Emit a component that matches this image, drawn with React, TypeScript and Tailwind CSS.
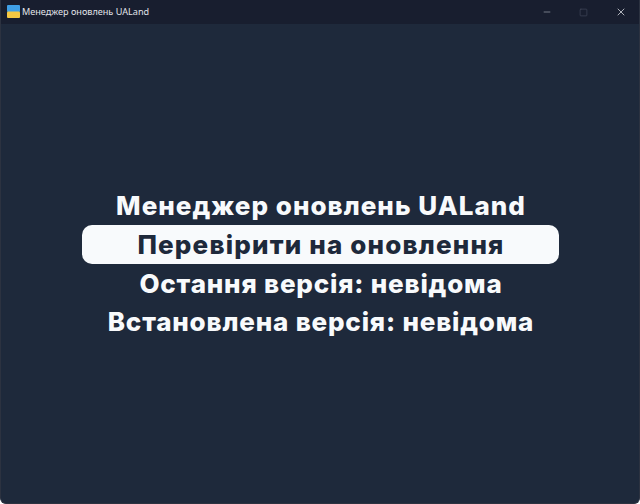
import { Minus, Square, X } from "lucide-react";

const lineClassName = "flex items-center justify-center pl-[2px] text-[26px] font-extrabold whitespace-nowrap";

export default function App() {
  return (
    <div className="flex h-[504px] w-[640px] flex-col overflow-hidden rounded-b-md border-x border-b border-[#2c3240] bg-[#1e293b] font-['Inter',sans-serif] text-[#f8fafc]">
      <div className="flex h-[24px] shrink-0 items-center justify-between bg-[#181e2f] pl-[6px]">
        <div className="flex items-center gap-[2px]">
          <svg width="13" height="13" viewBox="0 0 13 13">
            <rect width="13" height="7" rx="1" fill="#3f9fe6" />
            <rect y="6.5" width="13" height="6.5" rx="1" fill="#f5c842" />
          </svg>
          <span className="font-['Noto_Sans',sans-serif] text-[9.1px] text-[#e2e4ea]">Менеджер оновлень UALand</span>
        </div>
        <div className="flex h-full items-center">
          <div className="flex w-[37px] justify-center">
            <Minus className="h-[10px] w-[10px] text-[#aab0bc]" strokeWidth={1.5} />
          </div>
          <div className="flex w-[37px] justify-center">
            <Square className="h-[9px] w-[9px] text-[#4b5263]" strokeWidth={1.5} />
          </div>
          <div className="flex w-[37px] justify-center">
            <X className="h-[12px] w-[12px] text-[#e2e4ea]" strokeWidth={1.5} />
          </div>
        </div>
      </div>

      <div className="flex flex-col items-center pt-[162px]">
        <div className={`${lineClassName} h-[39px] tracking-[1.02px]`}>Менеджер оновлень UALand</div>
        <button className="flex h-[39px] w-[477px] items-center justify-center rounded-[10px] bg-[#f8fafc] pl-[2px] text-[26px] font-extrabold tracking-[1.17px] whitespace-nowrap text-[#1e293b]">
          Перевірити на оновлення
        </button>
        <div className={`${lineClassName} h-[38px] tracking-[0.81px]`}>Остання версія: невідома</div>
        <div className={`${lineClassName} h-[38px] tracking-[0.81px]`}>Встановлена версія: невідома</div>
      </div>
    </div>
  );
}
